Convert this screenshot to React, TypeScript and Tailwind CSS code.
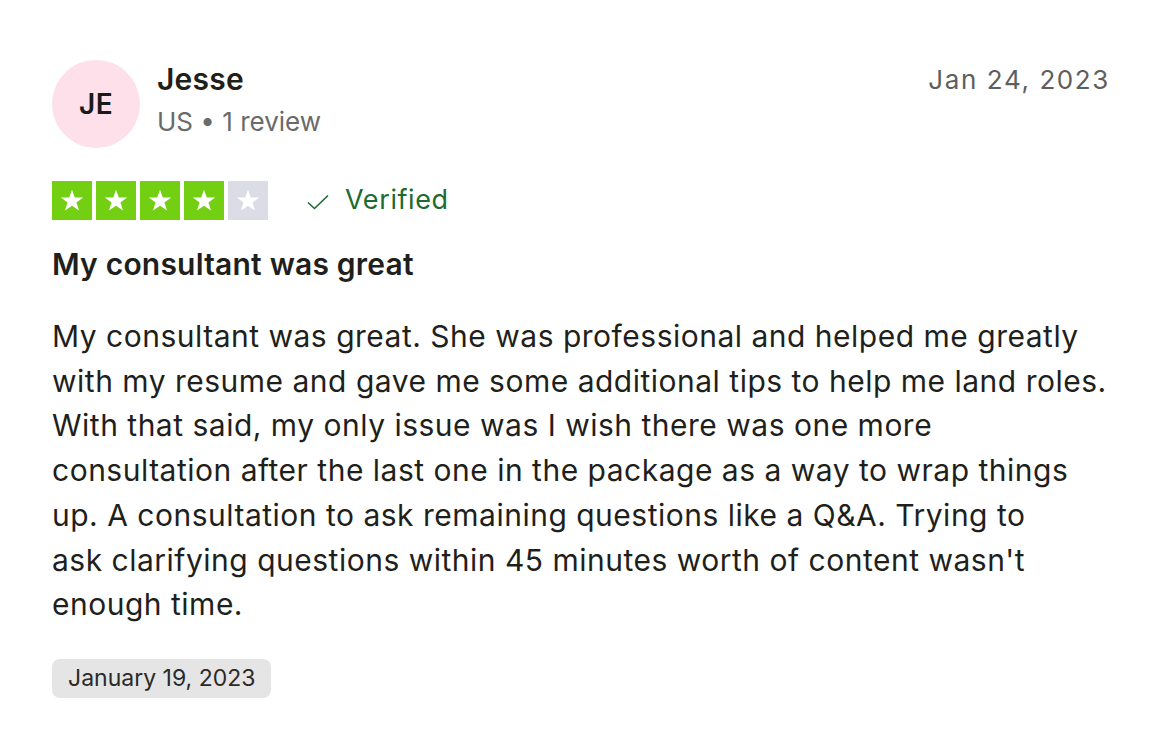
import React from "react";

const Star = ({ on }: { on: boolean }) => (
  <div className={`w-10 h-[39px] flex items-center justify-center ${on ? "bg-[#73cf11]" : "bg-[#dcdce6]"}`}>
    <svg viewBox="0 0 24 24" className="w-[26px] h-[26px]" fill="#fff">
      <path d="M12 2.5l2.6 7.3h7.7l-6.2 4.6 2.4 7.4L12 17.2l-6.5 4.6 2.4-7.4-6.2-4.6h7.7z" />
    </svg>
  </div>
);

export default function App() {
  return (
    <div className="w-[1168px] h-[740px] bg-white text-[#1f1f1c] pl-[52px] pr-[58px] pt-[60px]" style={{ fontFamily: "Inter, 'Noto Sans', sans-serif" }}>
      <div className="flex items-start justify-between">
        <div className="flex items-center gap-[17px]">
          <div className="w-[88px] h-[88px] rounded-full bg-[#fde0ea] flex items-center justify-center text-[28px] font-semibold text-[#1a1a1a] tracking-[0.5px]">JE</div>
          <div className="flex flex-col -mt-[6px]">
            <div className="text-[30px] font-semibold leading-[42px] tracking-[0.2px]">Jesse</div>
            <div className="text-[26px] leading-[44px] text-[#696a6a] tracking-[0px]">US • 1 review</div>
          </div>
        </div>
        <div className="text-[26px] leading-[40px] text-[#5e5e5e] tracking-[1.6px] pt-[0px]">Jan 24, 2023</div>
      </div>
      <div className="flex items-center mt-[32px]">
        <div className="flex gap-1">
          <Star on />
          <Star on />
          <Star on />
          <Star on />
          <Star on={false} />
        </div>
        <div className="flex items-center ml-[38px] text-[#1c6b2f]">
          <svg viewBox="0 0 24 24" className="w-[24px] h-[24px] mt-[4px]" fill="none" stroke="#1c6b2f" strokeWidth="1.6">
            <path d="M2 12.5l6.5 6L22 5.5" />
          </svg>
          <span className="ml-[15px] text-[27px] leading-[40px] tracking-[0.6px]">Verified</span>
        </div>
      </div>
      <div className="mt-[24px] text-[30px] font-semibold leading-[40px] tracking-[0.2px]">My consultant was great</div>
      <div className="mt-[30px] text-[30px] leading-[44.7px] tracking-[0.5px] w-[1080px]">
        My consultant was great. She was professional and helped me greatly<br />
        with my resume and gave me some additional tips to help me land roles.<br />
        With that said, my only issue was I wish there was one more<br />
        consultation after the last one in the package as a way to wrap things<br />
        up. A consultation to ask remaining questions like a Q&amp;A. Trying to<br />
        ask clarifying questions within 45 minutes worth of content wasn't<br />
        enough time.
      </div>
      <div className="mt-[32px] inline-flex items-center h-[39px] px-[16px] rounded-[8px] bg-[#e5e5e5] text-[23px] text-[#2a2a2a] tracking-[0px]">January 19, 2023</div>
    </div>
  );
}
